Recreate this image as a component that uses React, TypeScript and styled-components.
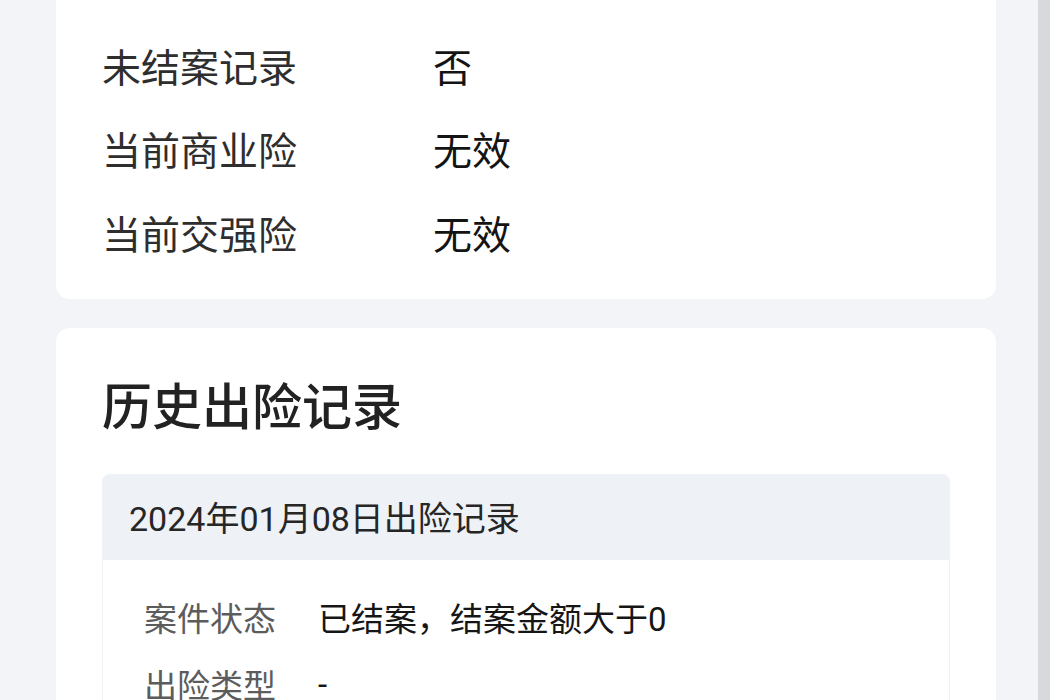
import React from 'react';
import styled, { createGlobalStyle } from 'styled-components';

const GlobalStyle = createGlobalStyle`
  html, body {
    margin: 0;
    padding: 0;
    height: 100%;
    overflow: hidden;
    background: #f3f4f7;
  }
  body {
    font-family: Roboto, "Noto Sans CJK SC", sans-serif;
    color: #1f1f1f;
  }
`;

const Screen = styled.div`
  display: flex;
  width: 1050px;
  height: 700px;
  overflow: hidden;
  background: #f3f4f7;
`;
const Content = styled.main`
  flex: 1;
  display: flex;
  flex-direction: column;
  gap: 29px;
  padding: 0 42px 0 56px;
`;
const ScrollRail = styled.div`
  width: 12px;
  flex-shrink: 0;
  background: #d8d9dd;
`;
const Card = styled.section<{ $cut?: boolean }>`
  background: #ffffff;
  border-radius: 14px;
  padding: ${({ $cut }) => ($cut ? '43px 46px 25px' : '51px 46px 0')};
  margin-top: ${({ $cut }) => ($cut ? '-20px' : '0')};
`;
const InfoRow = styled.div`
  display: flex;
  align-items: center;
  height: 83.5px;
  font-size: 39px;
`;
const InfoLabel = styled.span`
  width: 331px;
  color: #2e2e2e;
`;
const InfoValue = styled.span`
  color: #141414;
`;
const Title = styled.h2`
  margin: 0 0 37px;
  font-size: 50px;
  line-height: 58px;
  font-weight: 500;
  color: #222;
`;
const Record = styled.div`
  border-radius: 8px 8px 0 0;
  overflow: hidden;
`;
const RecordHead = styled.div`
  height: 86px;
  display: flex;
  align-items: center;
  padding-left: 27px;
  background: #eef1f6;
  font-size: 34px;
  color: #262626;
`;
const RecordBody = styled.div`
  padding: 24px 0 0 41px;
  border: 1px solid #eef1f6;
  border-top: none;
  min-height: 200px;
`;
const DetailRow = styled.div`
  display: flex;
  align-items: center;
  height: 67px;
  font-size: 33px;
`;
const DetailLabel = styled.span`
  width: 174px;
  color: #5c5c5c;
`;
const DetailValue = styled.span`
  color: #161616;
`;

const summary = [
  { label: '未结案记录', value: '否' },
  { label: '当前商业险', value: '无效' },
  { label: '当前交强险', value: '无效' },
];

const details = [
  { label: '案件状态', value: '已结案，结案金额大于0' },
  { label: '出险类型', value: '-' },
];

export default function App() {
  return (
    <>
      <GlobalStyle />
      <Screen>
        <Content>
          <Card $cut>
            {summary.map((row) => (
              <InfoRow key={row.label}>
                <InfoLabel>{row.label}</InfoLabel>
                <InfoValue>{row.value}</InfoValue>
              </InfoRow>
            ))}
          </Card>
          <Card>
            <Title>历史出险记录</Title>
            <Record>
              <RecordHead>2024年01月08日出险记录</RecordHead>
              <RecordBody>
                {details.map((row) => (
                  <DetailRow key={row.label}>
                    <DetailLabel>{row.label}</DetailLabel>
                    <DetailValue>{row.value}</DetailValue>
                  </DetailRow>
                ))}
              </RecordBody>
            </Record>
          </Card>
        </Content>
        <ScrollRail />
      </Screen>
    </>
  );
}
